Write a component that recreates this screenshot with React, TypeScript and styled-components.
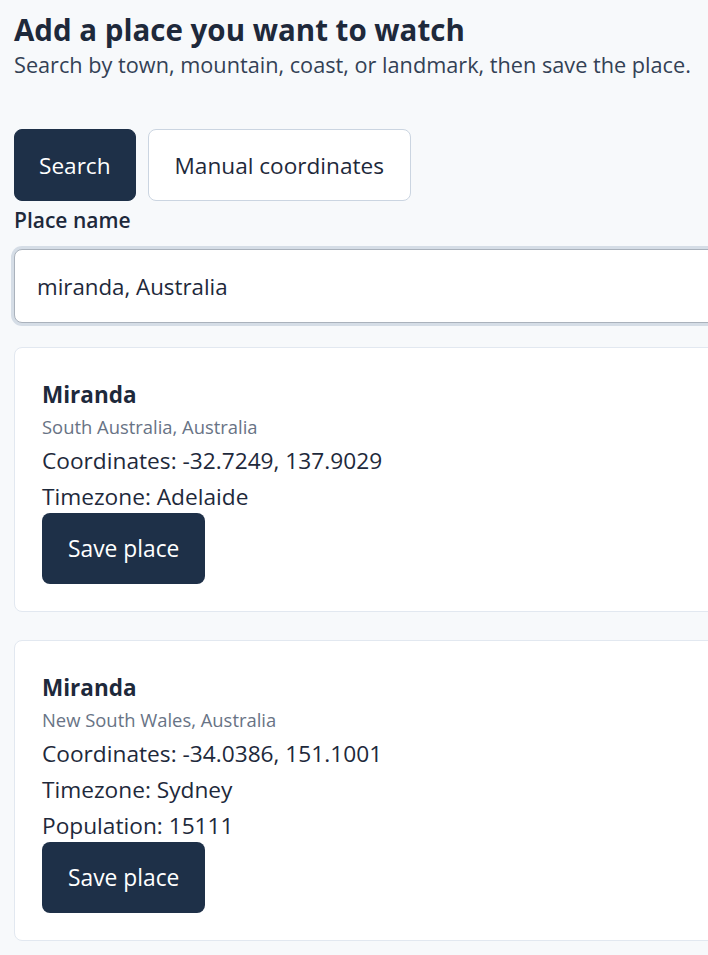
import { useEffect, useRef, useState } from "react";
import styled, { createGlobalStyle } from "styled-components";

const GlobalStyle = createGlobalStyle`
  html, body {
    margin: 0;
    padding: 0;
    background: #f7f9fb;
    overflow: clip;
  }
  body {
    font-family: "Open Sans", "Noto Sans", sans-serif;
    color: #1e293b;
  }
`;

const Page = styled.main`
  width: 100%;
  overflow: clip;
  padding: 12px 0 40px 14px;
  box-sizing: border-box;
`;

const Title = styled.h1`
  margin: 0;
  font-size: 29.5px;
  line-height: 36px;
  font-weight: 700;
  color: #1e293b;
`;

const Subtitle = styled.p`
  margin: 2px 0 0;
  font-size: 21.7px;
  line-height: 30px;
  color: #334155;
  white-space: nowrap;
`;

const Tabs = styled.div`
  display: flex;
  gap: 12px;
  margin-top: 49px;
`;

const Tab = styled.button<{ $active?: boolean }>`
  height: 72px;
  padding: 0 ${(p) => (p.$active ? 24 : 26)}px;
  border-radius: 8px;
  font-family: inherit;
  font-size: 22.6px;
  cursor: pointer;
  border: 1px solid ${(p) => (p.$active ? "#1e3048" : "#cbd5e1")};
  background: ${(p) => (p.$active ? "#1e3048" : "#ffffff")};
  color: ${(p) => (p.$active ? "#ffffff" : "#1e293b")};
`;

const Label = styled.label`
  display: block;
  margin-top: 5px;
  font-size: 21px;
  line-height: 28px;
  font-weight: 600;
`;

const Input = styled.input`
  display: block;
  box-sizing: border-box;
  width: 860px;
  height: 74px;
  margin-top: 15px;
  padding: 0 22px;
  border: 1px solid #aab2bc;
  border-radius: 8px;
  font-family: inherit;
  font-size: 22.3px;
  color: #1e293b;
  caret-color: #1e293b;
  background: #fff;
  box-shadow: 0 0 0 3px #d5dde6;
  outline: none;
`;

const Results = styled.div`
  display: flex;
  flex-direction: column;
  gap: 28px;
  margin-top: 24px;
`;

const Card = styled.article`
  width: 860px;
  flex-shrink: 0;
  box-sizing: border-box;
  padding: 31px 27px 27px;
  background: #fff;
  border: 1px solid #e2e8f0;
  border-radius: 8px;
`;

const PlaceName = styled.h2`
  margin: 0;
  font-size: 22.5px;
  line-height: 32px;
  font-weight: 700;
`;

const Region = styled.div`
  font-size: 18.4px;
  line-height: 32px;
  color: #687385;
`;

const Detail = styled.div`
  font-size: 22.7px;
  line-height: 36px;
`;

const SaveButton = styled.button`
  display: block;
  height: 71px;
  margin-top: -2px;
  padding: 0 26px;
  border: none;
  border-radius: 8px;
  background: #1e3048;
  color: #fff;
  font-family: inherit;
  font-size: 22.8px;
  cursor: pointer;
`;

type Place = {
  name: string;
  region: string;
  coords: string;
  timezone: string;
  population?: number;
};

const places: Place[] = [
  {
    name: "Miranda",
    region: "South Australia, Australia",
    coords: "-32.7249, 137.9029",
    timezone: "Adelaide",
  },
  {
    name: "Miranda",
    region: "New South Wales, Australia",
    coords: "-34.0386, 151.1001",
    timezone: "Sydney",
    population: 15111,
  },
];

export default function App() {
  const [mode, setMode] = useState<"search" | "manual">("search");
  const [query, setQuery] = useState("miranda, Australia");
  const inputRef = useRef<HTMLInputElement>(null);

  useEffect(() => {
    // keep the caret at the end without scrolling the page sideways
    inputRef.current?.focus({ preventScroll: true });
  }, []);

  return (
    <>
      <GlobalStyle />
      <Page>
        <Title>Add a place you want to watch</Title>
        <Subtitle>
          Search by town, mountain, coast, or landmark, then save the place.
        </Subtitle>
        <Tabs>
          <Tab $active={mode === "search"} onClick={() => setMode("search")}>
            Search
          </Tab>
          <Tab $active={mode === "manual"} onClick={() => setMode("manual")}>
            Manual coordinates
          </Tab>
        </Tabs>
        <Label htmlFor="place">Place name</Label>
        <Input
          id="place"
          ref={inputRef}
          value={query}
          onChange={(e) => setQuery(e.target.value)}
        />
        <Results>
          {places.map((p) => (
            <Card key={p.coords}>
              <PlaceName>{p.name}</PlaceName>
              <Region>{p.region}</Region>
              <Detail>Coordinates: {p.coords}</Detail>
              <Detail>Timezone: {p.timezone}</Detail>
              {p.population !== undefined && (
                <Detail>Population: {p.population}</Detail>
              )}
              <SaveButton>Save place</SaveButton>
            </Card>
          ))}
        </Results>
      </Page>
    </>
  );
}
